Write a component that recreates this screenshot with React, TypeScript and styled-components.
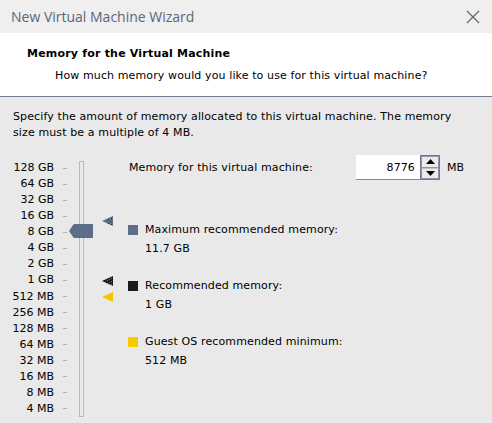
import React from "react";
import styled, { createGlobalStyle } from "styled-components";

const Global = createGlobalStyle`
  html, body { margin: 0; padding: 0; background: #e9e9e9; }
  body { font-family: "DejaVu Sans", Tahoma, sans-serif; }
`;

const Window = styled.div`
  width: 492px;
  height: 423px;
  overflow: hidden;
  display: flex;
  flex-direction: column;
  background: #e9e9e9;
  font-family: "DejaVu Sans", Tahoma, sans-serif;
  font-size: 11px;
  letter-spacing: 0.12px;
  color: #000;
`;

const TitleBar = styled.div`
  height: 33px;
  flex: none;
  display: flex;
  align-items: center;
  justify-content: space-between;
  padding: 0 12px 0 11px;
  background: #efefef;
  letter-spacing: 0;
`;

const TitleText = styled.span`
  font-family: "Open Sans", "Noto Sans", sans-serif;
  font-size: 14px;
  color: #5b6677;
  margin-top: -1px;
`;

const Header = styled.div`
  height: 64px;
  flex: none;
  background: #ffffff;
  display: flex;
  flex-direction: column;
  padding: 14px 0 0 27px;
  box-sizing: border-box;
  border-bottom: 1px solid #707d8d;
`;

const Heading = styled.div`
  font-weight: bold;
  font-size: 11px;
  line-height: 14px;
  letter-spacing: 0.2px;
`;

const SubHeading = styled.div`
  padding-left: 28px;
  margin-top: 8px;
  line-height: 14px;
`;

const Body = styled.div`
  flex: 1;
  display: flex;
  flex-direction: column;
  padding: 12px 13px 0 13px;
`;

const Description = styled.p`
  margin: 0;
  line-height: 16px;
`;

const Main = styled.div`
  display: flex;
  margin-top: 17px;
`;

const Scale = styled.div`
  position: relative;
  width: 116px;
  flex: none;
  display: flex;
`;

const Labels = styled.div`
  width: 41px;
  display: flex;
  flex-direction: column;
  align-items: flex-end;
  padding-top: 2px;
  letter-spacing: 0;
`;

const Label = styled.div`
  height: 16.07px;
  line-height: 16px;
  white-space: nowrap;
`;

const Ticks = styled.div`
  width: 14px;
  display: flex;
  flex-direction: column;
  padding: 2px 0 0 9px;
`;

const Tick = styled.div`
  height: 16.07px;
  display: flex;
  align-items: center;
  &::before {
    content: "";
    width: 4px;
    height: 1px;
    background: #b5b5b5;
  }
`;

const Track = styled.div`
  width: 3px;
  height: 254px;
  margin-left: 2px;
  margin-top: 3px;
  border: 1px solid #b9b9b9;
  background: #e9e9e9;
`;

const Thumb = styled.svg`
  position: absolute;
  left: 56px;
  top: 66px;
`;

const Marker = styled.svg<{ $top: number }>`
  position: absolute;
  left: 89px;
  top: ${(p) => p.$top}px;
`;

const Right = styled.div`
  flex: 1;
  display: flex;
  flex-direction: column;
`;

const MemoryRow = styled.div`
  display: flex;
  align-items: center;
  margin-top: -3px;
  height: 25px;
`;

const MemoryLabel = styled.span`
  width: 227px;
`;

const NumberBox = styled.div`
  width: 64px;
  height: 25px;
  box-sizing: border-box;
  background: #fff;
  border-bottom: 1px solid #7d8aa0;
  display: flex;
  align-items: center;
  justify-content: flex-end;
  padding-right: 5px;
`;

const Spinner = styled.div`
  width: 20px;
  height: 25px;
  box-sizing: border-box;
  border: 1px solid #6d7a90;
  background: #e4e4e4;
  display: flex;
  flex-direction: column;
`;

const SpinButton = styled.div<{ $down?: boolean }>`
  flex: 1;
  display: flex;
  align-items: center;
  justify-content: center;
  border: 1px solid #8a96aa;
  border-top-color: ${(p) => (p.$down ? "#c0c0c0" : "#8a96aa")};
  background: #ebebeb;
`;

const Unit = styled.span`
  margin-left: 7px;
`;

const Legend = styled.div`
  display: flex;
  flex-direction: column;
  margin-top: 41px;
  gap: 20px;
`;

const LegendItem = styled.div`
  display: flex;
  flex-direction: column;
`;

const LegendTitle = styled.div`
  display: flex;
  align-items: center;
  gap: 7px;
  line-height: 18px;
`;

const Swatch = styled.span<{ $color: string; $pattern?: boolean }>`
  width: 10px;
  height: 10px;
  flex: none;
  margin-left: -1px;
  background: ${(p) => p.$color};
  ${(p) =>
    p.$pattern
      ? `background-image: radial-gradient(#55627a 0.6px, transparent 0.7px); background-size: 2px 2px;`
      : ""}
`;

const LegendValue = styled.div`
  padding-left: 16px;
  line-height: 17px;
  margin-top: 1px;
`;

const labels = [
  "128 GB", "64 GB", "32 GB", "16 GB", "8 GB", "4 GB", "2 GB", "1 GB",
  "512 MB", "256 MB", "128 MB", "64 MB", "32 MB", "16 MB", "8 MB", "4 MB",
];

export default function App() {
  return (
    <Window>
      <Global />
      <TitleBar>
        <TitleText>New Virtual Machine Wizard</TitleText>
        <svg width="14" height="14" viewBox="0 0 14 14">
          <path d="M1 1 L13 13 M13 1 L1 13" stroke="#5b6677" strokeWidth="1.2" fill="none" />
        </svg>
      </TitleBar>
      <Header>
        <Heading>Memory for the Virtual Machine</Heading>
        <SubHeading>How much memory would you like to use for this virtual machine?</SubHeading>
      </Header>
      <Body>
        <Description>
          Specify the amount of memory allocated to this virtual machine. The memory
          <br />
          size must be a multiple of 4 MB.
        </Description>
        <Main>
          <Scale>
            <Labels>
              {labels.map((l) => (
                <Label key={l}>{l}</Label>
              ))}
            </Labels>
            <Ticks>
              {labels.map((l) => (
                <Tick key={l} />
              ))}
            </Ticks>
            <Track />
            <Thumb width="24" height="14" viewBox="0 0 24 14">
              <polygon points="0,7 4,1 5,0 24,0 24,14 5,14 4,13" fill="#5e6e88" />
            </Thumb>
            <Marker $top={58} width="12" height="11" viewBox="0 0 12 11">
              <polygon points="0,5 11,0 11,10" fill="#5e6e88" />
              <g fill="#1e2a3e">
                <rect x="6" y="3" width="1" height="1" />
                <rect x="8" y="5" width="1" height="1" />
                <rect x="6" y="7" width="1" height="1" />
                <rect x="9" y="2" width="1" height="1" />
                <rect x="9" y="8" width="1" height="1" />
              </g>
            </Marker>
            <Marker $top={118} width="12" height="11" viewBox="0 0 12 11">
              <polygon points="0,5 11,0 11,10" fill="#1c1c1c" />
              <g fill="#6a7890">
                <rect x="5" y="4" width="1" height="1" />
                <rect x="7" y="3" width="1" height="1" />
                <rect x="7" y="6" width="1" height="1" />
                <rect x="9" y="2" width="1" height="1" />
                <rect x="9" y="5" width="1" height="1" />
                <rect x="9" y="8" width="1" height="1" />
              </g>
            </Marker>
            <Marker $top={134} width="12" height="11" viewBox="0 0 12 11">
              <polygon points="0,5 11,0 11,10" fill="#f5c400" />
            </Marker>
          </Scale>
          <Right>
            <MemoryRow>
              <MemoryLabel>Memory for this virtual machine:</MemoryLabel>
              <NumberBox>8776</NumberBox>
              <Spinner>
                <SpinButton>
                  <svg width="9" height="5" viewBox="0 0 9 5">
                    <polygon points="4.5,0 9,5 0,5" fill="#000" />
                  </svg>
                </SpinButton>
                <SpinButton $down>
                  <svg width="9" height="5" viewBox="0 0 9 5">
                    <polygon points="0,0 9,0 4.5,5" fill="#000" />
                  </svg>
                </SpinButton>
              </Spinner>
              <Unit>MB</Unit>
            </MemoryRow>
            <Legend>
              <LegendItem>
                <LegendTitle>
                  <Swatch $color="#5e6e88" />
                  Maximum recommended memory:
                </LegendTitle>
                <LegendValue>11.7 GB</LegendValue>
              </LegendItem>
              <LegendItem>
                <LegendTitle>
                  <Swatch $color="#1a1a1a" $pattern />
                  Recommended memory:
                </LegendTitle>
                <LegendValue>1 GB</LegendValue>
              </LegendItem>
              <LegendItem>
                <LegendTitle>
                  <Swatch $color="#f8c800" />
                  Guest OS recommended minimum:
                </LegendTitle>
                <LegendValue>512 MB</LegendValue>
              </LegendItem>
            </Legend>
          </Right>
        </Main>
      </Body>
    </Window>
  );
}
